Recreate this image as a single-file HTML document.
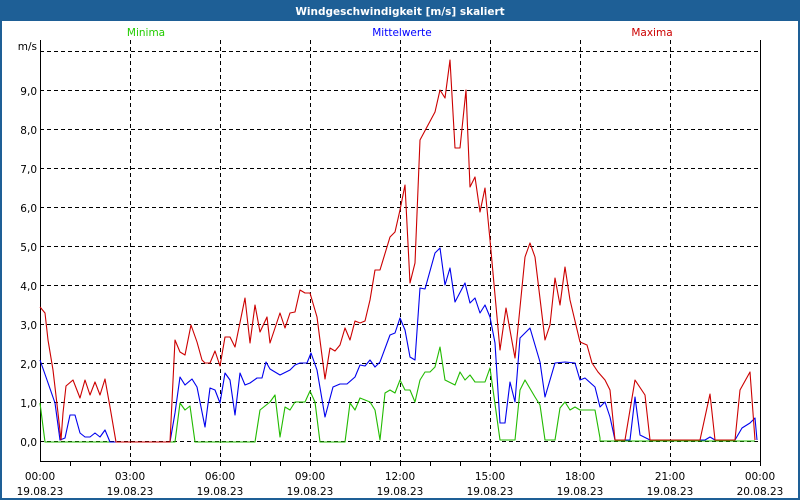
<!DOCTYPE html>
<html><head><meta charset="utf-8"><style>
html,body{margin:0;padding:0;width:800px;height:500px;overflow:hidden;background:#fff}
svg{display:block}
text{font-family:"DejaVu Sans","Liberation Sans",sans-serif;font-size:10.5px}
</style></head><body>
<svg width="800" height="500" viewBox="0 0 800 500" xmlns="http://www.w3.org/2000/svg">
<rect x="0" y="0" width="800" height="500" fill="#1e5f96"/>
<rect x="2" y="21" width="796" height="477" fill="#fff"/>
<text x="400" y="15" fill="#fff" font-weight="bold" text-anchor="middle" font-size="11">Windgeschwindigkeit [m/s] skaliert</text>
<text x="146" y="36" fill="#22cc00" text-anchor="middle">Minima</text>
<text x="402" y="36" fill="#0000ff" text-anchor="middle">Mittelwerte</text>
<text x="652" y="36" fill="#cc0000" text-anchor="middle">Maxima</text>
<g stroke="#000" stroke-width="1" stroke-dasharray="4,3" fill="none" shape-rendering="crispEdges">
<line x1="40" y1="51.5" x2="760" y2="51.5"/>
<line x1="40" y1="90.5" x2="760" y2="90.5"/>
<line x1="40" y1="129.5" x2="760" y2="129.5"/>
<line x1="40" y1="168.5" x2="760" y2="168.5"/>
<line x1="40" y1="207.5" x2="760" y2="207.5"/>
<line x1="40" y1="246.5" x2="760" y2="246.5"/>
<line x1="40" y1="285.5" x2="760" y2="285.5"/>
<line x1="40" y1="324.5" x2="760" y2="324.5"/>
<line x1="40" y1="363.5" x2="760" y2="363.5"/>
<line x1="40" y1="402.5" x2="760" y2="402.5"/>
<line x1="40" y1="441.5" x2="760" y2="441.5"/>
<line x1="130.5" y1="40" x2="130.5" y2="461"/>
<line x1="220.5" y1="40" x2="220.5" y2="461"/>
<line x1="310.5" y1="40" x2="310.5" y2="461"/>
<line x1="400.5" y1="40" x2="400.5" y2="461"/>
<line x1="490.5" y1="40" x2="490.5" y2="461"/>
<line x1="580.5" y1="40" x2="580.5" y2="461"/>
<line x1="670.5" y1="40" x2="670.5" y2="461"/>
</g>
<g stroke="#000" stroke-width="1" fill="none" shape-rendering="crispEdges">
<path d="M40.5 40V461.5H760.5V40"/>
<path d="M70.5 461v5M100.5 461v5M130.5 461v5M160.5 461v5M190.5 461v5M220.5 461v5M250.5 461v5M280.5 461v5M310.5 461v5M340.5 461v5M370.5 461v5M400.5 461v5M430.5 461v5M460.5 461v5M490.5 461v5M520.5 461v5M550.5 461v5M580.5 461v5M610.5 461v5M640.5 461v5M670.5 461v5M700.5 461v5M730.5 461v5M760.5 461v5"/>
</g>
<g fill="#000" text-anchor="end">
<text x="37" y="50">m/s</text>
<text x="37" y="95">9,0</text><text x="37" y="134">8,0</text><text x="37" y="173">7,0</text>
<text x="37" y="212">6,0</text><text x="37" y="251">5,0</text><text x="37" y="290">4,0</text>
<text x="37" y="329">3,0</text><text x="37" y="368">2,0</text><text x="37" y="407">1,0</text>
<text x="37" y="446">0,0</text>
</g>
<g fill="#000" text-anchor="middle">
<text x="40" y="480">00:00</text><text x="40" y="495">19.08.23</text>
<text x="130" y="480">03:00</text><text x="130" y="495">19.08.23</text>
<text x="220" y="480">06:00</text><text x="220" y="495">19.08.23</text>
<text x="310" y="480">09:00</text><text x="310" y="495">19.08.23</text>
<text x="400" y="480">12:00</text><text x="400" y="495">19.08.23</text>
<text x="490" y="480">15:00</text><text x="490" y="495">19.08.23</text>
<text x="580" y="480">18:00</text><text x="580" y="495">19.08.23</text>
<text x="670" y="480">21:00</text><text x="670" y="495">19.08.23</text>
<text x="760" y="480">00:00</text><text x="760" y="495">20.08.23</text>
</g>
<g fill="none" stroke-width="1.1" stroke-linejoin="round">
<polyline stroke="#22bb00" points="40,403 45,442 175,442 180,403 185,410 190,406 195,442 255,442 260,410 270,402 275,395 280,437 285,407 290,410 295,402 305,402 310,391 315,402 320,442 345,442 350,403 355,410 360,398 370,402 375,410 380,440 385,393 390,390 395,393 400,380 405,390 410,390 415,402 420,380 425,372 430,372 435,367 440,347 445,380 455,385 460,372 465,380 470,375 475,382 485,382 490,368 500,440 515,440 520,390 525,380 535,397 540,405 545,440 555,440 560,408 565,402 570,410 575,407 580,410 595,410 600,438 600,441 755,441"/>
<polyline stroke="#0000ee" points="40,360 47,380 55,403 60,440 65,438 70,415 75,415 80,433 85,437 90,437 95,433 100,437 105,430 110,442 170,442 175,413 180,377 185,385 192,379 197,387 205,427 210,388 215,390 220,403 225,373 230,380 235,415 240,373 245,385 250,383 257,378 262,378 266,362 270,369 280,375 290,370 295,365 300,363 307,363 311,353 317,370 325,417 333,387 340,384 347,384 355,377 360,365 365,366 370,360 375,367 380,362 390,335 395,333 400,318 405,330 410,357 415,360 420,288 425,289 435,253 440,248 445,285 450,268 455,302 465,283 470,303 475,298 480,313 485,305 490,317 495,343 500,423 505,423 510,382 515,402 520,338 530,328 540,362 545,397 555,363 565,362 575,363 580,380 585,378 595,387 600,407 605,402 610,417 615,440 630,440 635,397 640,435 650,440 705,440 710,437 715,440 735,440 742,428 750,423 755,418 757,440"/>
<polyline stroke="#cc0000" points="40,307 45,313 48,340 53,370 58,413 61,440 63,413 66,386 73,380 80,398 85,380 90,395 95,382 100,395 105,379 110,407 116,442 170,442 175,340 180,352 185,355 191,325 197,342 202,360 205,363 210,363 215,351 220,366 225,337 230,337 235,347 245,298 250,343 255,305 260,332 267,317 270,343 280,313 285,328 290,313 295,312 300,290 305,293 310,293 317,317 325,379 330,348 335,351 340,345 345,328 350,340 355,321 360,323 365,321 370,300 375,270 380,270 390,237 395,232 400,210 405,185 410,283 415,263 420,140 435,112 440,90 445,98 450,60 455,148 460,148 466,90 470,187 475,177 480,212 485,188 490,240 500,350 506,308 515,358 525,257 530,243 535,257 545,340 550,325 555,278 560,305 565,267 570,300 580,342 587,345 592,363 598,372 605,380 610,390 615,440 625,440 635,380 645,395 650,440 700,440 710,394 715,440 735,440 740,390 750,372 755,440"/>
</g>
</svg>
</body></html>
